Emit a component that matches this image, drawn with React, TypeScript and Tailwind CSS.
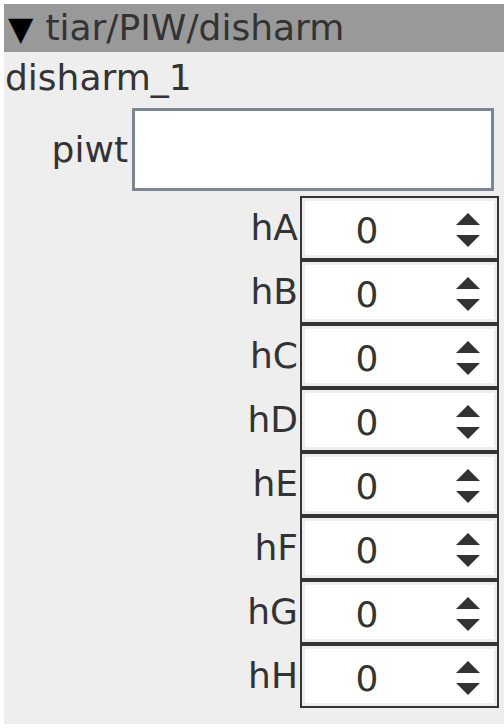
import React from "react";

const labels = ["hA", "hB", "hC", "hD", "hE", "hF", "hG", "hH"];

function Spin({ label }: { label: string }) {
  return (
    <div className="flex items-center">
      <span className="pr-[2px] leading-none">{label}</span>
      <div className="w-[199px] h-[64px] border-2 border-[#333333] bg-[#eeeeee] p-[3px]">
        <div className="h-full bg-white flex items-center">
          <span className="w-[124px] text-center pt-[6px] leading-none">0</span>
          <div className="ml-[27px] flex flex-col items-center gap-[10px] pt-[3px]">
            <svg width="24" height="12" viewBox="0 0 24 12">
              <polygon points="12,0 24,12 0,12" fill="#333333" />
            </svg>
            <svg width="24" height="12" viewBox="0 0 24 12">
              <polygon points="0,0 24,0 12,12" fill="#333333" />
            </svg>
          </div>
        </div>
      </div>
    </div>
  );
}

export default function App() {
  return (
    <div
      className="bg-white p-1 h-[728px] text-[#333333] text-[36px]"
      style={{ fontFamily: "'DejaVu Sans', sans-serif" }}
    >
      <div className="bg-[#eeeeee] h-[720px] -mr-1">
        <div className="h-12 bg-[#999999] flex items-center pl-1 leading-none">
          <span className="text-black text-[33px] mr-[12px]">▼</span>
          <span>tiar/PIW/disharm</span>
        </div>
        <div className="h-[52px] flex items-center pl-[1px] leading-none">disharm_1</div>
        <div className="flex items-center justify-end pr-[10px] mt-[4px]">
          <span className="pr-[4px] leading-none">piwt</span>
          <div className="w-[362px] h-[83px] bg-white border-[3px] border-[#7b8794]" />
        </div>
        <div className="flex flex-col items-end mt-[5px] pr-[5px]">
          {labels.map((l) => (
            <Spin key={l} label={l} />
          ))}
        </div>
      </div>
    </div>
  );
}
